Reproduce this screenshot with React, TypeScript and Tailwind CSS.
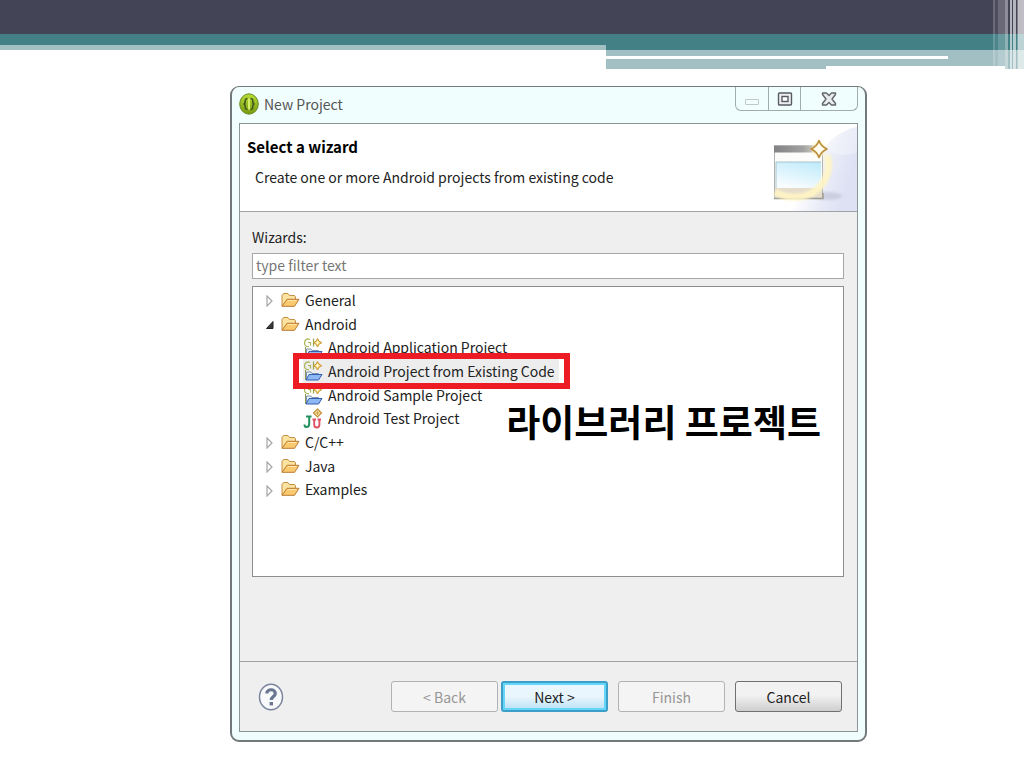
import { useState } from 'react';

const wizards = [
  { id: 0, name: "General", kind: "closed" },
  { id: 1, name: "Android", kind: "open" },
  { id: 2, name: "Android Application Project", kind: "project" },
  { id: 3, name: "Android Project from Existing Code", kind: "project" },
  { id: 4, name: "Android Sample Project", kind: "project" },
  { id: 5, name: "Android Test Project", kind: "test" },
  { id: 6, name: "C/C++", kind: "closed" },
  { id: 7, name: "Java", kind: "closed" },
  { id: 8, name: "Examples", kind: "closed" },
];

function SlideHeader() {
  return (
    <header className="relative h-[70px] w-full">
      <div className="h-[34px] bg-[#444457]" />
      <div className="flex">
        <div className="w-[606px] shrink-0">
          <div className="h-[11px] bg-[#438086]" />
          <div className="h-[5px] bg-[#a2bfc3]" />
        </div>
        <div className="flex-1">
          <div className="h-4 bg-[#438086]" />
          <div className="h-[19px] bg-[#a2bfc3] pt-[6px]">
            <div className="mr-[76px] h-[3px] bg-white" />
            <div className="mt-[7px] mr-[19px] ml-[220px] h-[3px] bg-white" />
          </div>
        </div>
      </div>
      <div className="absolute top-0 right-0 flex h-[70px] w-[31px]">
        <div className="w-[2px] bg-white/20" />
        <div className="w-[3px] bg-white/5" />
        <div className="w-[7px] bg-white/20" />
        <div className="w-[3px] bg-white/40" />
        <div className="w-[2px]" />
        <div className="w-[2px] bg-white/60" />
        <div className="w-px" />
        <div className="w-[3px] bg-white/60" />
        <div className="w-px" />
        <div className="w-px bg-white/30" />
        <div className="flex-1 bg-white/65" />
      </div>
    </header>
  );
}

function AppIcon() {
  return (
    <svg className="h-[22px] w-5" viewBox="0 0 20 22" aria-hidden="true">
      <defs>
        <linearGradient id="lime" x1="0" y1="0" x2="0" y2="1">
          <stop offset="0" stopColor="#b9dd38" />
          <stop offset="1" stopColor="#769a0c" />
        </linearGradient>
      </defs>
      <ellipse cx="10" cy="11" rx="9.3" ry="10.2" fill="url(#lime)" stroke="#6c8a22" />
      <path d="M8.4 5.5C6.2 5.5 6.2 6.5 6.2 8.4C6.2 10 5.800 11 4.400 11C5.800 11 6.2 12 6.2 13.6C6.2 15.5 6.2 16.5 8.4 16.5M11.6 5.5C13.8 5.5 13.8 6.5 13.8 8.4C13.8 10 14.2 11 15.6 11C14.2 11 13.8 12 13.8 13.6C13.8 15.5 13.8 16.5 11.6 16.5" fill="none" stroke="#3f581c" strokeWidth="1.600" />
      <path d="M10 5.500v11" stroke="#d6f06c" strokeWidth="2" />
    </svg>
  );
}

function WizardBanner() {
  return (
    <svg className="h-[87px] w-24 shrink-0" viewBox="0 0 96 87" aria-hidden="true">
      <defs>
        <linearGradient id="sweep" x1="0.25" y1="0.35" x2="0.9" y2="0.6">
          <stop offset="0" stopColor="#fff" />
          <stop offset="0.55" stopColor="#e9ebf7" />
          <stop offset="1" stopColor="#dde1f3" />
        </linearGradient>
        <linearGradient id="bar" x1="0" y1="0" x2="1" y2="0">
          <stop offset="0" stopColor="#828284" />
          <stop offset="0.6" stopColor="#a2a2a2" />
          <stop offset="1" stopColor="#f0e8d4" />
        </linearGradient>
        <linearGradient id="pane" x1="0.8" y1="0" x2="0.4" y2="1">
          <stop offset="0" stopColor="#c0ebfb" />
          <stop offset="1" stopColor="#fafdff" />
        </linearGradient>
        <filter id="soft" x="-20%" y="-20%" width="140%" height="140%">
          <feGaussianBlur stdDeviation="1.2" />
        </filter>
      </defs>
      <path d="M96 3C82 6 70 14 62 26L30 87H96Z" fill="url(#sweep)" />
      <path d="M96 3C82 6 72 13 66 22C70 32 80 32 96 29Z" fill="#fff" opacity="0.3" />
      <ellipse cx="66" cy="72" rx="15" ry="4" fill="#bfc3d5" opacity="0.65" filter="url(#soft)" />
      <rect x="13.500" y="22" width="48" height="52" fill="#fcfcfa" stroke="#b2b2b0" />
      <rect x="13" y="21.500" width="49" height="7" fill="url(#bar)" />
      <rect x="15" y="38" width="45" height="27" fill="url(#pane)" />
      <path d="M15 65V38H60" fill="none" stroke="#a9c4cf" />
      <rect x="14" y="64" width="47" height="9" fill="#e6dccb" />
      <path d="M13 74.500H62V69" fill="none" stroke="#a09e90" strokeWidth="1.500" />
      <path d="M66 31C72 52 58 73 34 73C25 73 19 71 14 68" fill="none" stroke="#fff5c4" strokeWidth="7" opacity="0.9" filter="url(#soft)" />
      <circle cx="58" cy="25" r="7" fill="#fff3c8" filter="url(#soft)" />
      <path d="M58 16.500Q60 22.500 66 25Q60 27.500 58 33.500Q56 27.500 50 25Q56 22.500 58 16.500Z" fill="#fffdf0" stroke="#bd903e" strokeWidth="1.700" strokeLinejoin="round" />
    </svg>
  );
}

function FolderIcon() {
  return (
    <svg className="h-4 w-[19px]" viewBox="0 0 19 16" aria-hidden="true">
      <path d="M1 14V3.500L2.500 1.500H7L8.500 3.500H13.500L14.500 5V7" fill="#fbe3a2" stroke="#c58e40" strokeLinejoin="round" />
      <path d="M1 14.300L6 7.300H18L13.500 14.300Z" fill="#fbca70" stroke="#b9792f" strokeLinejoin="round" />
      <path d="M6.700 8.500H15.500" stroke="#ffe6ab" />
    </svg>
  );
}

function ProjectIcon() {
  return (
    <svg className="h-[21px] w-5" viewBox="0 0 20 21" aria-hidden="true">
      <path d="M2.500 10V20" stroke="#8d9a55" />
      <path d="M3.500 19.500V12H8L9 13.500H15.500V15" fill="#eaf2fd" stroke="#7d92b4" />
      <path d="M3 20L6 14.500H19L15.500 20Z" fill="#8db8f5" stroke="#335fae" strokeLinejoin="round" />
      <path d="M7 2.500C4.500 1 1.500 2.500 1.500 6C1.500 8.500 3.500 10 6 9.500M5 5.500H7.500V8.500" fill="none" stroke="#a9b552" strokeWidth="1.200" />
      <path d="M10.500 1.500V9.500" stroke="#94a54b" strokeWidth="1.200" />
      <path d="M14.500 1.500L16 4.200L18.800 5.700L16 7.200L14.500 10L13 7.200L10.500 5.700L13 4.200Z" fill="#f8da75" stroke="#c8932f" strokeLinejoin="round" />
      <path d="M14.500 4V7.400M12.800 5.700H16.200" stroke="#fffbe0" />
    </svg>
  );
}

function TestIcon() {
  return (
    <svg className="h-[21px] w-5" viewBox="0 0 20 21" aria-hidden="true">
      <path d="M3 8.500H8.500M6.200 8.500V15.500Q6.200 19 3.500 19Q1.500 19 1.500 16.500" fill="none" stroke="#21905d" strokeWidth="2" />
      <path d="M9.500 11.500H13M14.500 11.500H18M11.200 11.500V16.500Q11.200 19.500 13.700 19.500Q16.400 19.500 16.400 16.500V11.500" fill="none" stroke="#dd5264" strokeWidth="1.900" />
      <path d="M14.500 1L18.500 5L14.500 9L10.500 5Z" fill="#fff0b0" stroke="#c18d37" strokeWidth="1.200" />
      <path d="M14.500 3V7M12.500 5H16.500" stroke="#c89c48" />
    </svg>
  );
}

function TreeItem({ name, kind, selected, onSelect }: { name: string; kind: string; selected: boolean; onSelect: () => void }) {
  const isFolder = kind === "closed" || kind === "open";

  return (
    <li className={`relative flex items-center ${isFolder ? 'pl-3' : 'pl-[50px]'}`}>
      {isFolder && (
        <svg className="mt-[3px] mr-[7px] h-3 w-[9px]" viewBox="0 0 9 12" aria-hidden="true">
          {kind === "open" ? (
            <path d="M8 2.500V9.500H1.500Z" fill="#393939" stroke="#222" strokeLinejoin="round" />
          ) : (
            <path d="M2 1L7 6L2 11Z" fill="#fff" stroke="#a5a5a5" strokeWidth="1.200" />
          )}
        </svg>
      )}
      <button type="button" aria-pressed={selected} onClick={onSelect} className={`flex h-6 items-center gap-[5px] pr-1 whitespace-nowrap ${selected ? 'bg-[#ededed]' : ''}`}>
        {isFolder && <FolderIcon />}
        {kind === "project" && <ProjectIcon />}
        {kind === "test" && <TestIcon />}
        <span>{name}</span>
      </button>
      {name === "Android Project from Existing Code" && (
        <span className="pointer-events-none absolute -inset-y-[6px] left-10 z-10 w-[277px] border-6 border-[#ed1c24]" />
      )}
    </li>
  );
}

export default function App() {
  const [selected, setSelected] = useState(3);
  const [filter, setFilter] = useState('');

  return (
    <div className="min-h-screen bg-white font-['Noto_Sans_CJK_KR','Open_Sans',sans-serif] text-[14px] leading-6 text-[#222]">
      <SlideHeader />
      <main className="mt-4 mr-[157px] mb-6 ml-[230px] rounded-[9px] border-2 border-t border-[#73797b] bg-[#f1fefe] px-[7px] pb-2">
        <div className="flex h-9 items-start justify-between">
          <h1 className="flex items-center gap-[5px] pt-[5px] text-[#555]">
            <AppIcon />
            New Project
          </h1>
          <div className="flex h-6 w-[123px] overflow-hidden rounded-b-md border border-t-0 border-[#a3acac]">
            <button type="button" aria-label="Minimize" className="flex w-[33px] items-center justify-center border-r border-[#a3acac]">
              <span className="mt-[7px] h-[6px] w-[14px] rounded-[1px] border border-[#c0c7c7]" />
            </button>
            <button type="button" aria-label="Maximize" className="flex w-8 items-center justify-center border-r border-[#a3acac]">
              <svg className="h-[14px] w-4" viewBox="0 0 16 14" aria-hidden="true">
                <rect x="1.500" y="1" width="13" height="12" rx="1" fill="#eee" stroke="#555b64" strokeWidth="1.400" />
                <rect x="5" y="4.500" width="6" height="5" fill="#fff" stroke="#555b64" strokeWidth="1.400" />
              </svg>
            </button>
            <button type="button" aria-label="Close" className="flex flex-1 items-center justify-center">
              <svg className="h-[14px] w-4" viewBox="0 0 16 14" aria-hidden="true">
                <path d="M1.500 1H5.500L8 3.500L10.500 1H14.500V2.500L11 7L14.500 11.500V13H10.500L8 10.500L5.500 13H1.500V11.500L5 7L1.500 2.500Z" fill="#e8eaeb" stroke="#606469" strokeWidth="1.400" strokeLinejoin="round" />
              </svg>
            </button>
          </div>
        </div>

        <div className="border border-[#8c9496] bg-[#efefef]">
          <div className="flex justify-between border-b border-[#a0a4a8] bg-white">
            <div className="pt-[11px] pl-[7px]">
              <h2 className="text-[15px] font-bold text-black">Select a wizard</h2>
              <p className="pt-[6px] pl-2">Create one or more Android projects from existing code</p>
            </div>
            <WizardBanner />
          </div>

          <div className="pt-[13px] pr-[13px] pl-3">
            <label htmlFor="filter">Wizards:</label>
            <input
              id="filter"
              type="text"
              value={filter}
              onChange={(e) => setFilter(e.target.value)}
              placeholder="type filter text"
              className="mt-1 block h-[26px] w-full border border-[#a4a6a8] bg-white px-[3px] pb-[2px] placeholder:text-[#777]"
            />
            <div className="relative mt-[7px] h-[291px] border border-[#8b8e91] bg-white">
              <ul className="grid h-[214px] grid-rows-9 pt-px">
                {wizards.map(({ id, name, kind }) => (
                  <TreeItem key={id} name={name} kind={kind} selected={selected === id} onSelect={() => setSelected(id)} />
                ))}
              </ul>
              <p className="absolute top-[110px] right-[22px] text-[37px] leading-[48px] font-bold whitespace-nowrap text-black">라이브러리 프로젝트</p>
            </div>
          </div>

          <div className="mt-[84px] flex h-[70px] items-center border-t border-[#a0a4a6] pr-[15px] pl-[18px]">
            <button type="button" aria-label="Help" className="mr-auto">
              <svg className="h-7 w-[26px]" viewBox="0 0 26 28" aria-hidden="true">
                <ellipse cx="13" cy="14" rx="11.500" ry="12.800" fill="#f8f9fb" stroke="#7a849c" strokeWidth="1.500" />
                <path d="M8.800 10.500C8.800 5.500 17.300 5.500 17.300 10.500C17.300 13.500 13.300 13.500 13.300 17" fill="none" stroke="#6a7690" strokeWidth="3.200" />
                <rect x="11.600" y="19" width="3.400" height="3.400" fill="#6a7690" />
              </svg>
            </button>
            <button type="button" disabled className="mr-[3px] h-[31px] w-[107px] rounded-[3px] border border-[#b0b3b5] bg-[#f4f4f4] text-[#969696]">&lt; Back</button>
            <button type="button" className="mr-[10px] h-[31px] w-[107px] rounded-[3px] border-2 border-[#3c9fca] bg-linear-to-b from-[#e9f6fd] from-50% to-[#b9e0f6] to-100% text-[#222] inset-ring-2 inset-ring-[#65d5f8]">Next &gt;</button>
            <button type="button" disabled className="mr-[10px] h-[31px] w-[107px] rounded-[3px] border border-[#b0b3b5] bg-[#f4f4f4] text-[#969696]">Finish</button>
            <button type="button" className="h-[31px] w-[107px] rounded-[3px] border border-[#707070] bg-linear-to-b from-[#f2f2f2] from-45% to-[#cfcfcf] text-[#222]">Cancel</button>
          </div>
        </div>
      </main>
    </div>
  );
}
